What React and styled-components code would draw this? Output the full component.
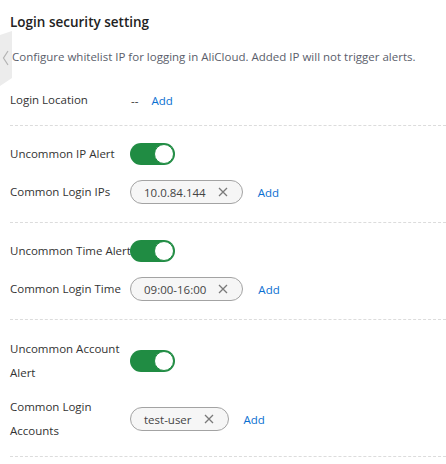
import React from "react";
import styled, { createGlobalStyle } from "styled-components";

const GlobalStyle = createGlobalStyle`
  body {
    margin: 0;
    background: #ffffff;
    font-family: "Open Sans", "Liberation Sans", sans-serif;
    font-size: 11.5px;
    color: #333333;
  }
`;

const Page = styled.div`
  position: relative;
  width: 446px;
  height: 464px;
  overflow: hidden;
  padding: 10px 0 0 10px;
  box-sizing: border-box;
`;

const SideTab = styled.svg`
  position: absolute;
  left: 0;
  top: 30px;
`;

const Title = styled.h2`
  margin: 0;
  font-size: 13.5px;
  font-weight: 600;
  line-height: 24px;
  color: #222222;
`;

const Description = styled.p`
  margin: 11px 0 0 2px;
  line-height: 24px;
  color: #5a5e6b;
  white-space: nowrap;
`;

const Section = styled.section`
  display: flex;
  flex-direction: column;
  gap: 10px;
  padding: ${p => p.$pad || "14px 0 16px"};
  border-top: ${p => (p.$first ? "none" : "1px dashed #dcdcdc")};
  border-bottom: ${p => (p.$last ? "1px dashed #dcdcdc" : "none")};
`;

const Row = styled.div`
  display: flex;
  align-items: center;
  min-height: 28px;
`;

const Label = styled.div`
  width: 120px;
  flex-shrink: 0;
  line-height: 24px;
  color: #333333;
  white-space: ${p => (p.$nowrap ? "nowrap" : "normal")};
`;

const Controls = styled.div`
  display: flex;
  align-items: center;
  gap: ${p => p.$gap || 16}px;
  padding-left: ${p => p.$indent || 0}px;
`;

const Muted = styled.span`
  color: #333333;
`;

const Link = styled.a`
  color: #0a6fd1;
  cursor: pointer;
  text-decoration: none;
`;

const Switch = styled.button`
  position: relative;
  width: 45px;
  height: 22px;
  padding: 0;
  border: none;
  border-radius: 11px;
  background: #208c43;
  flex-shrink: 0;

  &::after {
    content: "";
    position: absolute;
    top: 1px;
    right: 1px;
    width: 18px;
    height: 18px;
    border-radius: 50%;
    background: #ffffff;
    border: 1px solid #208c43;
  }
`;

const Tag = styled.span`
  display: inline-flex;
  align-items: center;
  gap: 12px;
  height: 22px;
  padding: 0 14px 0 13px;
  border: 1px solid #a3a3a3;
  border-radius: 12px;
  background: #f6f6f6;
  color: #444444;
`;

const Close = styled.svg`
  display: block;
`;

const CloseIcon = () => (
  <Close width="10" height="10" viewBox="0 0 10 10">
    <path d="M1 1 L9 9 M9 1 L1 9" stroke="#7a7a7a" strokeWidth="1.3" fill="none" />
  </Close>
);

const TagWithAdd = ({ value }) => (
  <Controls $gap={15}>
    <Tag>
      {value}
      <CloseIcon />
    </Tag>
    <Link>Add</Link>
  </Controls>
);

const Item = ({ label, nowrap, children }) => (
  <Row>
    <Label $nowrap={nowrap}>{label}</Label>
    {children}
  </Row>
);

export default function App() {
  return (
    <>
      <GlobalStyle />
      <Page>
        <SideTab width="13" height="58" viewBox="0 0 13 58">
          <polygon points="0,5 12,1 12,48 0,56" fill="#ececec" />
          <path d="M8 21 L3.5 28 L8 35" stroke="#b3b3b3" strokeWidth="1.2" fill="none" />
        </SideTab>
        <Title>Login security setting</Title>
        <Description>
          Configure whitelist IP for logging in AliCloud. Added IP will not trigger alerts.
        </Description>
        <Section $first $pad="17px 0 11px">
          <Item label="Login Location">
            <Controls $gap={13} $indent={1}>
              <Muted>--</Muted>
              <Link>Add</Link>
            </Controls>
          </Item>
        </Section>
        <Section>
          <Item label="Uncommon IP Alert">
            <Switch />
          </Item>
          <Item label="Common Login IPs">
            <TagWithAdd value="10.0.84.144" />
          </Item>
        </Section>
        <Section>
          <Item label="Uncommon Time Alert" nowrap>
            <Switch />
          </Item>
          <Item label="Common Login Time">
            <TagWithAdd value="09:00-16:00" />
          </Item>
        </Section>
        <Section $last $pad="17px 0 13px">
          <Item label="Uncommon Account Alert">
            <Switch />
          </Item>
          <Item label="Common Login Accounts">
            <TagWithAdd value="test-user" />
          </Item>
        </Section>
      </Page>
    </>
  );
}
